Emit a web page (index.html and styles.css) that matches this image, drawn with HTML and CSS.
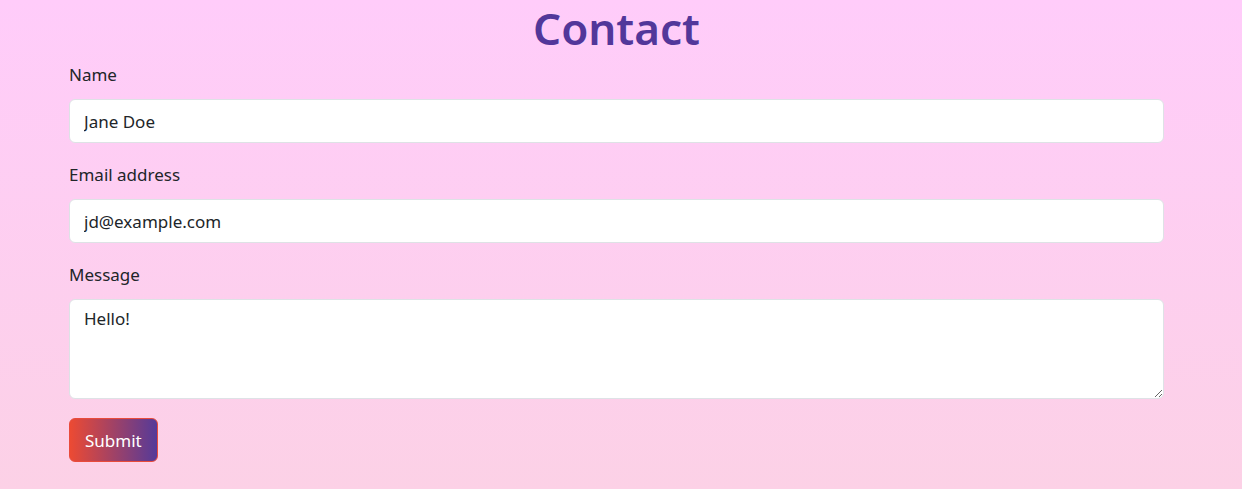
FILE: index.html
```html
<!DOCTYPE html>
<html lang="en">
<head>
<meta charset="utf-8">
<title>Contact</title>
<link rel="stylesheet" href="styles.css">
</head>
<body>
<main class="container">
  <h1 class="title">Contact</h1>
  <form class="form">
    <div class="group">
      <label class="label" for="name">Name</label>
      <input class="control" id="name" type="text" value="Jane Doe">
    </div>
    <div class="group">
      <label class="label" for="email">Email address</label>
      <input class="control" id="email" type="email" value="jd@example.com">
    </div>
    <div class="group">
      <label class="label" for="msg">Message</label>
      <textarea class="control area" id="msg">Hello!</textarea>
    </div>
    <button class="submit" type="button">Submit</button>
  </form>
</main>
</body>
</html>
```
FILE: styles.css
```css
html, body {
  margin: 0;
  padding: 0;
  height: 100%;
}
body {
  background: linear-gradient(180deg, #ffccfa 0%, #fcd1e6 100%);
  font-family: "Noto Sans", "Open Sans", sans-serif;
  color: #212529;
}
.container {
  width: 1095px;
  margin-left: 69px;
}
.title {
  margin: 0;
  padding-top: 2px;
  text-align: center;
  font-size: 44px;
  line-height: 52px;
  font-weight: 600;
  color: #52379a;
}
.form {
  display: flex;
  flex-direction: column;
  padding-top: 9px;
}
.group {
  display: flex;
  flex-direction: column;
  margin-bottom: 20px;
}
.label {
  font-size: 17px;
  line-height: 24px;
  margin-bottom: 12px;
}
.control {
  box-sizing: border-box;
  width: 100%;
  height: 44px;
  padding: 8px 14px;
  font-family: inherit;
  font-size: 17px;
  line-height: 26px;
  color: #212529;
  background: #fff;
  border: 1px solid #dee2e6;
  border-radius: 6px;
  outline: none;
}
.area {
  height: 100px;
  padding-top: 6px;
  resize: vertical;
  display: block;
}
.submit {
  align-self: flex-start;
  margin-top: -1px;
  box-sizing: border-box;
  height: 44px;
  padding: 0 15px;
  font-family: inherit;
  font-size: 17px;
  color: #fff;
  background: linear-gradient(90deg, #ec4a33 0%, #553a99 100%);
  border: 1px solid #e94b3c;
  border-radius: 6px;
}
```
